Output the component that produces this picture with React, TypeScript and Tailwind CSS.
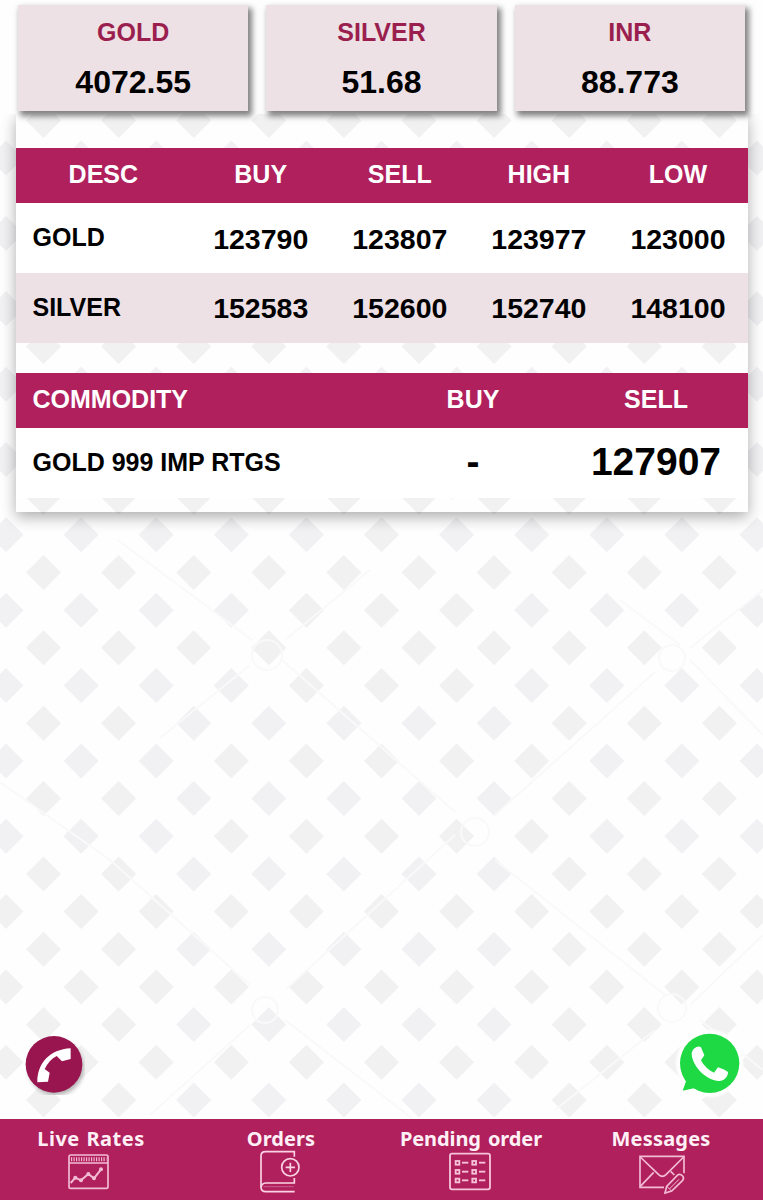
import type { ReactNode } from 'react';

interface Quote {
  name: string;
  value: string;
}

interface Rate {
  name: string;
  buy: string;
  sell: string;
  high: string;
  low: string;
}

interface NavItem {
  label: string;
  spacing: string;
  icon: ReactNode;
}

const quotes: Quote[] = [
  { name: 'GOLD', value: '4072.55' },
  { name: 'SILVER', value: '51.68' },
  { name: 'INR', value: '88.773' },
];

const rates: Rate[] = [
  { name: 'GOLD', buy: '123790', sell: '123807', high: '123977', low: '123000' },
  { name: 'SILVER', buy: '152583', sell: '152600', high: '152740', low: '148100' },
];

// Diamond wallpaper: two interleaved grids, some of the diamonds slightly blue
const STEP_X = 75.1;
const STEP_Y = 75.35;

function buildDiamonds() {
  const items: { x: number; y: number; blue: boolean }[] = [];
  for (let row = -6; row < 9; row++) {
    for (let col = -1; col < 11; col++) {
      const y = 572.5 + row * STEP_Y;
      items.push({ x: 43.5 + col * STEP_X, y, blue: row > 1 && col > 1 && col < 7 });
      items.push({ x: 6 + col * STEP_X, y: y + STEP_Y / 2, blue: row < 4 && (col < 4 - row / 2 || col > 6 + row / 2) });
    }
  }
  return items;
}

const diamonds = buildDiamonds();

function Wallpaper() {
  return (
    <svg className="absolute inset-0 -z-10" width="763" height="1200" viewBox="0 0 763 1200" aria-hidden="true">
      <rect width="763" height="1200" fill="#fefefe" />
      {diamonds.map((d) => (
        <path
          key={`${d.x}-${d.y}`}
          d={`M${d.x} ${d.y - 17.5}l17.5 17.5l-17.5 17.5l-17.5 -17.5z`}
          fill={d.blue ? '#f1f1f4' : '#f1f1f1'}
        />
      ))}
      <g stroke="#f9f9f9" strokeWidth="2" fill="none">
        <path d="M118 540L252 640M282 660L455 812M495 860L665 995M700 1020L763 1070" />
        <path d="M0 782L110 860L250 985M285 1020L440 1140" />
        <path d="M160 738L250 665M285 640L370 570M450 500L520 440" />
        <path d="M620 600L680 645M690 660L763 735M763 590L690 648M655 672L495 815M455 835L285 990M250 1025L150 1115" />
        <path d="M763 935L690 1005M655 1030L555 1110" />
        <circle cx="267" cy="655" r="15" />
        <circle cx="672" cy="658" r="13" />
        <circle cx="475" cy="832" r="14" />
        <circle cx="265" cy="1010" r="13" />
        <circle cx="672" cy="1008" r="14" />
      </g>
    </svg>
  );
}

function PhoneIcon() {
  return (
    <svg width="60" height="60" viewBox="75 45 180 180">
      <defs>
        <filter id="phone-shadow" x="-20%" y="-20%" width="140%" height="140%">
          <feGaussianBlur stdDeviation="7" />
        </filter>
      </defs>
      <circle cx="168" cy="143" r="83" fill="#777" opacity="0.55" filter="url(#phone-shadow)" />
      <circle cx="162" cy="133" r="85" fill="#99154f" />
      <path
        d="M112 187C111 131 149 88 212 85V117L186 124L170 108C155 116 142 130 134 147L149 158L144 185Z"
        fill="#fff"
      />
    </svg>
  );
}

function WhatsAppIcon() {
  return (
    <svg width="72" height="72" viewBox="42 20 216 216">
      <defs>
        <filter id="wa-glow" x="-20%" y="-20%" width="140%" height="140%">
          <feGaussianBlur stdDeviation="3" />
        </filter>
      </defs>
      <circle cx="149" cy="129" r="101" fill="#fff" filter="url(#wa-glow)" />
      <circle cx="149" cy="129" r="89" fill="#1ed944" />
      <path d="M68 162L78 183L68 211L105 203L125 190Z" fill="#1ed944" />
      <path
        d="M113 79C103 81 95 90 95 102C98 141 143 183 178 182C192 181 204 171 204 155C198 150 184 144 174 141L162 157C149 153 129 134 123 120L133 105L123 81Q119 78 113 79Z"
        fill="#fff"
      />
    </svg>
  );
}

function ChartIcon() {
  return (
    <svg className="mr-[5px]" width="43" height="37" viewBox="201 129 129 111" fill="none" stroke="#f3bcd5" strokeWidth="5">
      <rect x="207" y="135" width="117" height="100" rx="5" />
      <path d="M207 159H324" />
      <path d="M213 148H319" strokeWidth="12" strokeDasharray="3.5 4" />
      <path d="M212 219L226 203L243 211L265 192L282 205L303 178" strokeWidth="6" />
      <g fill="#f3bcd5" stroke="none">
        <circle cx="226" cy="203" r="6" />
        <circle cx="243" cy="211" r="6" />
        <circle cx="265" cy="192" r="6" />
        <circle cx="282" cy="205" r="6" />
        <circle cx="303" cy="178" r="6" />
      </g>
    </svg>
  );
}

function BookIcon() {
  return (
    <svg className="mr-[2px] mb-[2px]" width="44" height="44" viewBox="774 117 132 132" fill="none" stroke="#fbd3e4" strokeWidth="5">
      <path d="M883 140V125H796Q783 125 783 138V232Q784 245 797 245H884" />
      <path d="M883 204V219H797Q785 220 783 232" />
      <path d="M790 230H881" strokeWidth="2" opacity="0.5" />
      <circle cx="871" cy="172" r="26" />
      <path d="M871 158V186M857 172H885" />
    </svg>
  );
}

function ListIcon() {
  return (
    <svg className="mr-[2px]" width="44" height="39" viewBox="204 126 132 117" fill="none" stroke="#f6c4da" strokeWidth="5.5">
      <rect x="210" y="131" width="120" height="107" rx="6" />
      {[158, 185, 211].map((y) => (
        <g key={y}>
          <rect x="227" y={y - 5} width="11" height="11" />
          <path d={`M246 ${y}H265`} />
          <rect x="277" y={y - 5} width="11" height="11" />
          <path d={`M297 ${y}H316`} />
        </g>
      ))}
    </svg>
  );
}

function MailIcon() {
  return (
    <svg className="mt-[5px] ml-[2px]" width="48" height="41" viewBox="774 132 144 123" fill="none" stroke="#f3bcd5" strokeWidth="5">
      <path d="M852 232H780V139H912V190" />
      <path d="M781 141L836 194Q847 204 858 194L911 141" />
      <path d="M781 229L821 187M872 184L883 195" />
      <path d="M855 249L860 229L894 194Q901 191 908 198Q913 204 908 211L875 243Z" />
      <path d="M868 237L897 208M860 229L875 243" strokeWidth="3" />
    </svg>
  );
}

const navItems: NavItem[] = [
  { label: 'Live Rates', spacing: 'tracking-[0.5px] [word-spacing:1px]', icon: <ChartIcon /> },
  { label: 'Orders', spacing: 'tracking-[0.1px]', icon: <BookIcon /> },
  { label: 'Pending order', spacing: 'tracking-[-0.1px] [word-spacing:2px]', icon: <ListIcon /> },
  { label: 'Messages', spacing: 'tracking-[0.2px]', icon: <MailIcon /> },
];

function RatesTable() {
  return (
    <div>
      <div className="grid h-[55.5px] grid-cols-[24%_19%_19%_19%_19%] items-center bg-[#b0205d] pb-[1px] text-center text-[25px] text-white">
        <div>DESC</div>
        <div>BUY</div>
        <div>SELL</div>
        <div>HIGH</div>
        <div>LOW</div>
      </div>
      {rates.map((rate) => (
        <div
          key={rate.name}
          className="grid h-[69.75px] grid-cols-[24%_19%_19%_19%_19%] items-center bg-white text-center text-[28.5px] odd:bg-[#eee1e6]"
        >
          <div className="pl-[17px] text-left text-[25px]">{rate.name}</div>
          <div className="pt-[2px]">{rate.buy}</div>
          <div className="pt-[2px]">{rate.sell}</div>
          <div className="pt-[2px]">{rate.high}</div>
          <div className="pt-[2px]">{rate.low}</div>
        </div>
      ))}
    </div>
  );
}

function CommodityTable() {
  return (
    <div className="mt-[30px]">
      <div className="grid h-[55.5px] grid-cols-[50%_25%_25%] items-center bg-[#b0205d] pb-[1px] text-center text-[25px] text-white">
        <div className="pl-[17px] text-left">COMMODITY</div>
        <div>BUY</div>
        <div>SELL</div>
      </div>
      <div className="grid h-[70px] grid-cols-[50%_25%_25%] items-center bg-white pb-[1px] text-center text-[39px]">
        <div className="pt-[1px] pl-[17px] text-left text-[25px]">GOLD 999 IMP RTGS</div>
        <div>-</div>
        <div>127907</div>
      </div>
    </div>
  );
}

export default function App() {
  return (
    <div className="relative isolate flex h-[1200px] w-[763px] flex-col overflow-hidden font-['Liberation_Sans',sans-serif] font-bold text-black">
      <Wallpaper />

      {/* Spot prices */}
      <div className="z-10 flex h-[114px] gap-[18px] bg-[#fefefe] pt-[5px] pr-[18px] pl-[18px]">
        {quotes.map((quote) => (
          <div
            key={quote.name}
            className="flex h-[106px] flex-1 flex-col items-center bg-[#eee1e6] pt-[11px] shadow-[3px_4px_6px_1px_rgba(0,0,0,0.5)]"
          >
            <div className="text-[25px] leading-[32px] text-[#9a1f4e]">{quote.name}</div>
            <div className="mt-[14px] text-[32px] leading-[40px]">{quote.value}</div>
          </div>
        ))}
      </div>

      <div className="mx-[15.5px] h-[398px] pt-[33.5px] shadow-[0_5px_14px_0_rgba(0,0,0,0.32)]">
        <RatesTable />
        <CommodityTable />
      </div>

      {/* Contact buttons */}
      <div className="mt-auto flex items-start justify-between pr-[17px] pb-[20px] pl-[25px]">
        <div className="pt-[8px]">
          <PhoneIcon />
        </div>
        <WhatsAppIcon />
      </div>

      <div className="h-[81px] bg-[#b0205d]">
        <div className="-ml-[4px] grid w-[760px] grid-cols-4">
          {navItems.map((item) => (
            <div key={item.label} className="flex flex-col items-center pt-[9px]">
              <div
                className={`h-[21px] pt-[1px] font-['Noto_Sans',sans-serif] text-[20px] leading-[20px] font-bold whitespace-nowrap text-[#fff0f6] ${item.spacing}`}
              >
                {item.label}
              </div>
              <div className="flex h-[45px] items-center justify-center">{item.icon}</div>
            </div>
          ))}
        </div>
      </div>
    </div>
  );
}
